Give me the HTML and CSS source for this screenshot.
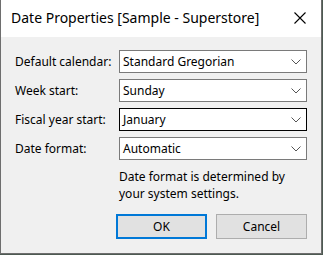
FILE: index.html
```html
<!DOCTYPE html>
<html>
<head>
<meta charset="utf-8" />
<title>Date Properties</title>
<link rel="stylesheet" href="styles.css">
</head>
<body>
<div class="dialog">
    <div class="titlebar">
        <span class="title">Date Properties [Sample - Superstore]</span>
        <svg class="close" width="12" height="12" viewBox="0 0 12 12"><path d="M0.5 0.5 L11.5 11.5 M11.5 0.5 L0.5 11.5" stroke="#000" stroke-width="1.1" fill="none"/></svg>
    </div>
    <div class="content">
        <div class="form">
            <label>Default calendar:</label>
            <div class="combo"><span>Standard Gregorian</span><svg class="chev" width="10" height="6" viewBox="0 0 10 6"><path d="M0.5 0.5 L5 5 L9.5 0.5" stroke="#555" fill="none"/></svg></div>
            <label>Week start:</label>
            <div class="combo"><span>Sunday</span><svg class="chev" width="10" height="6" viewBox="0 0 10 6"><path d="M0.5 0.5 L5 5 L9.5 0.5" stroke="#555" fill="none"/></svg></div>
            <label>Fiscal year start:</label>
            <div class="combo focus"><span>January</span><svg class="chev" width="10" height="6" viewBox="0 0 10 6"><path d="M0.5 0.5 L5 5 L9.5 0.5" stroke="#555" fill="none"/></svg></div>
            <label>Date format:</label>
            <div class="combo"><span>Automatic</span><svg class="chev" width="10" height="6" viewBox="0 0 10 6"><path d="M0.5 0.5 L5 5 L9.5 0.5" stroke="#555" fill="none"/></svg></div>
            <div></div>
            <p class="hint">Date format is determined by<br>your system settings.</p>
        </div>
        <div class="buttons">
            <button class="btn default">OK</button>
            <button class="btn">Cancel</button>
        </div>
    </div>
</div>
</body>
</html>
```
FILE: styles.css
```css
*{ padding:0; margin:0; box-sizing:border-box; }
body{
    background:#4d5a52;
    font-family:"Noto Sans","Open Sans",sans-serif;
    font-size:12px;
    color:#000;
}
.dialog{
    width:322px;
    height:254px;
    background:#f0f0f0;
    border:1px solid #6e6e6e;
    border-top:0;
    display:flex;
    flex-direction:column;
}
.titlebar{
    height:37px;
    background:#fff;
    display:flex;
    align-items:center;
    justify-content:space-between;
    padding:0 15px 0 10px;
}
.title{
    font-size:14px;
    padding-bottom:2px;
}
.close{ margin-bottom:1px; }
.content{
    padding:13px 14px 0 14px;
}
.form{
    display:grid;
    grid-template-columns:104px 1fr;
    row-gap:6px;
    align-items:center;
}
.form label{ white-space:nowrap; }
.combo{
    height:23px;
    background:#fff;
    border:1px solid #7a7a7a;
    display:flex;
    align-items:center;
    justify-content:space-between;
    padding:0 3px 0 3px;
}
.combo.focus{ border-color:#000; }
.combo .chev{ margin-right:2px; }
.hint{
    line-height:17px;
    margin-top:2px;
    white-space:nowrap;
}
.buttons{
    display:flex;
    justify-content:flex-end;
    gap:9px;
    margin-top:12px;
}
.btn{
    width:91px;
    height:25px;
    background:#e1e1e1;
    border:1px solid #adadad;
    font-family:inherit;
    font-size:12px;
    color:#000;
}
.btn.default{ border:2px solid #0078d7; }
```
